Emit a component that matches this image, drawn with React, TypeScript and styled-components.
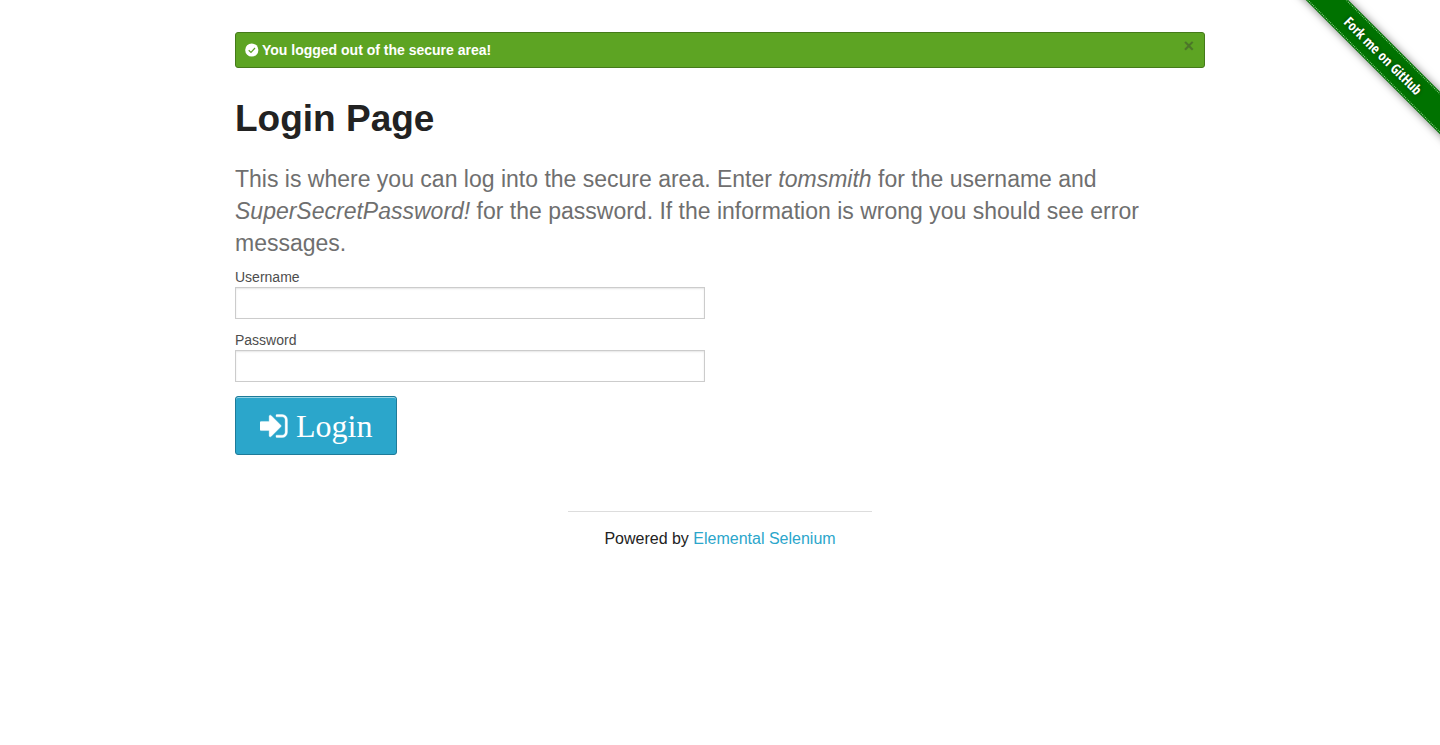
import React from "react";
import styled, { createGlobalStyle } from "styled-components";

const sans = `"Liberation Sans", Arial, sans-serif`;

const GlobalStyle = createGlobalStyle`
  *, *::before, *::after { box-sizing: border-box; }
  body {
    margin: 0;
    background: #fff;
    color: #222;
    font-family: ${sans};
    font-size: 16px;
    line-height: 1.5;
    overflow-x: hidden;
  }
`;

const Page = styled.div`
  position: relative;
  overflow: hidden;
  padding-bottom: 32px;
`;

const Row = styled.div`
  max-width: 1000px;
  margin: 0 auto;
  padding: 32px 15px 0;
`;

const Alert = styled.div`
  display: flex;
  align-items: center;
  height: 36px;
  padding: 0 10px 0 9px;
  border: 1px solid #457a1a;
  border-radius: 3px;
  background: #5da423;
  color: #fff;
  font-size: 14px;
  font-weight: bold;
  gap: 3px;
`;

const AlertText = styled.span`
  flex: 1;
`;

const Close = styled.button`
  align-self: flex-start;
  padding: 0;
  border: 0;
  background: none;
  color: #333;
  opacity: 0.4;
  font: bold 18px/26px ${sans};
  cursor: pointer;
`;

const Title = styled.h2`
  margin: 25px 0 0;
  font-size: 37px;
  line-height: 52px;
`;

const Intro = styled.h4`
  margin: 18px 0 8px;
  color: #6f6f6f;
  font-size: 23px;
  font-weight: normal;
  line-height: 32px;
`;

const Form = styled.form`
  display: flex;
  flex-direction: column;
  align-items: flex-start;
`;

const Field = styled.div`
  width: 100%;
  max-width: 470px;
  margin-bottom: 11px;
`;

const Label = styled.label`
  display: block;
  color: #4d4d4d;
  font-size: 14px;
  line-height: 20px;
`;

const Input = styled.input`
  display: block;
  width: 100%;
  height: 32px;
  padding: 8px;
  border: 1px solid #ccc;
  border-radius: 0;
  background: #fff;
  box-shadow: inset 0 1px 2px rgba(0, 0, 0, 0.1);
  font: 14px ${sans};
`;

const LoginButton = styled.button`
  display: flex;
  align-items: center;
  gap: 8px;
  height: 59px;
  margin-top: 3px;
  padding: 0 24px;
  border: 1px solid #1e7b99;
  border-radius: 3px;
  background: #2ba6cb;
  box-shadow: inset 0 1px 0 rgba(255, 255, 255, 0.5);
  color: #fff;
  font: 32px/32px "Liberation Serif", "Times New Roman", serif;
  cursor: pointer;
`;

const Footer = styled.footer`
  width: 304px;
  margin: 56px auto 0;
  padding-top: 15px;
  border-top: 1px solid #ddd;
  text-align: center;
`;

const FooterLink = styled.a`
  color: #2ba6cb;
  text-decoration: none;
`;

const RibbonCorner = styled.div`
  position: absolute;
  top: 0;
  right: 0;
  width: 149px;
  height: 149px;
  overflow: hidden;
`;

const Ribbon = styled.a`
  position: absolute;
  top: 41px;
  right: -53px;
  width: 220px;
  padding: 4px 0;
  background: #007200;
  box-shadow: 0 0 8px rgba(0, 0, 0, 0.5);
  color: #fff;
  font: bold 14px/22px "Liberation Sans Narrow", "Open Sans Condensed", sans-serif;
  text-align: center;
  text-decoration: none;
  text-shadow: 0 0 4px rgba(0, 0, 0, 0.5);
  transform: rotate(45deg);

  &::before {
    content: "";
    position: absolute;
    inset: 1px 0;
    border: dotted #8fd08f;
    border-width: 1px 0;
  }
`;

const CheckIcon = () => (
  <svg width="14" height="14" viewBox="0 0 14 14" aria-hidden="true">
    <circle cx="6.8" cy="7" r="6.6" fill="#fff" />
    <path d="M3.7 7.2 6 9.4 10 5" fill="none" stroke="#5da423" strokeWidth="1.2" />
  </svg>
);

const SignInIcon = () => (
  <svg
    width="28"
    height="32"
    viewBox="0 0 1568 1792"
    fill="currentColor"
    stroke="currentColor"
    strokeWidth="20"
    aria-hidden="true"
  >
    <path d="M1184 896q0 26-19 45l-544 544q-19 19-45 19t-45-19-19-45v-288h-448q-26 0-45-19t-19-45v-384q0-26 19-45t45-19h448v-288q0-26 19-45t45-19 45 19l544 544q19 19 19 45zm352-352v704q0 119-84.5 203.5t-203.5 84.5h-320q-13 0-22.5-9.5t-9.5-22.5q0-4-1-20t-.5-26.5 3-23.5 10-19.5 20.5-6.5h320q66 0 113-47t47-113v-704q0-66-47-113t-113-47h-312l-11.5-1-11.5-3-8-5.5-7-9-2-13.5q0-4-1-20t-.5-26.5 3-23.5 10-19.5 20.5-6.5h320q119 0 203.5 84.5t84.5 203.5z" />
  </svg>
);

export default function App() {
  return (
    <Page>
      <GlobalStyle />
      <Row>
        <Alert role="status">
          <CheckIcon />
          <AlertText>You logged out of the secure area!</AlertText>
          <Close type="button" aria-label="Close">×</Close>
        </Alert>
        <Title>Login Page</Title>
        <Intro>
          This is where you can log into the secure area. Enter <em>tomsmith</em> for the username
          and <em>SuperSecretPassword!</em> for the password. If the information is wrong you should
          see error messages.
        </Intro>
        <Form onSubmit={(e) => e.preventDefault()}>
          <Field>
            <Label htmlFor="username">Username</Label>
            <Input id="username" name="username" type="text" />
          </Field>
          <Field>
            <Label htmlFor="password">Password</Label>
            <Input id="password" name="password" type="password" />
          </Field>
          <LoginButton type="submit">
            <SignInIcon />
            Login
          </LoginButton>
        </Form>
      </Row>
      <Footer>
        Powered by <FooterLink href="#">Elemental Selenium</FooterLink>
      </Footer>
      <RibbonCorner>
        <Ribbon href="#">Fork me on GitHub</Ribbon>
      </RibbonCorner>
    </Page>
  );
}
